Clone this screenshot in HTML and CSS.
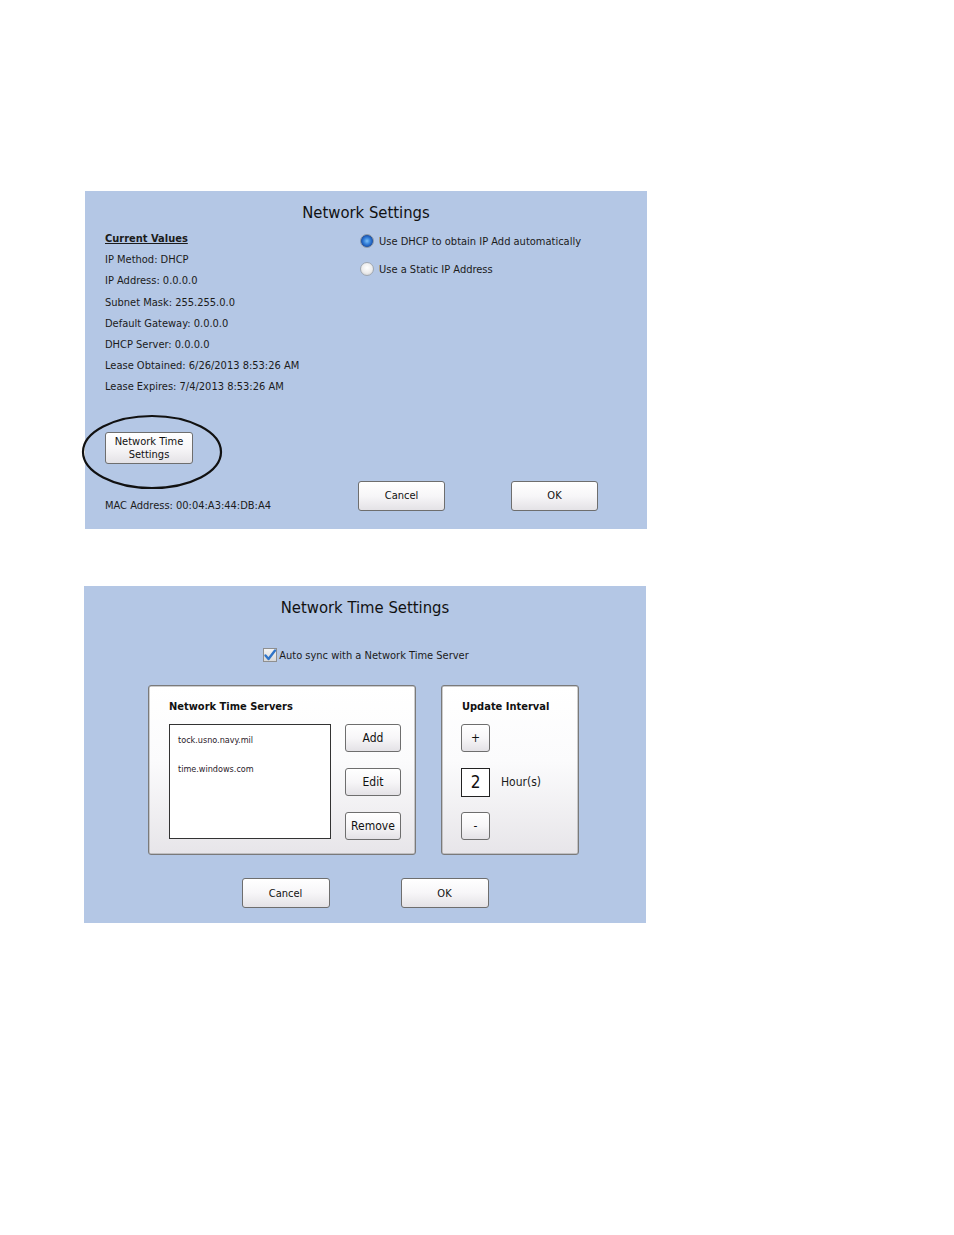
FILE: index.html
```html
<!DOCTYPE html>
<html>
<head>
<meta charset="utf-8">
<link rel="stylesheet" href="styles.css">
</head>
<body>
<div class="page">
  <section class="panel panel-net">
    <h1 class="title">Network Settings</h1>
    <div class="net-body">
      <div class="col-left">
        <div class="values">
          <div class="line heading">Current Values</div>
          <div class="line">IP Method: DHCP</div>
          <div class="line">IP Address: 0.0.0.0</div>
          <div class="line">Subnet Mask: 255.255.0.0</div>
          <div class="line">Default Gateway: 0.0.0.0</div>
          <div class="line">DHCP Server: 0.0.0.0</div>
          <div class="line">Lease Obtained: 6/26/2013 8:53:26 AM</div>
          <div class="line">Lease Expires: 7/4/2013 8:53:26 AM</div>
        </div>
        <div class="ntp-wrap">
          <button class="btn btn-ntp">Network Time<br>Settings</button>
          <svg class="ellipse" width="142" height="76" viewBox="0 0 142 76"><ellipse cx="71" cy="38" rx="69" ry="36" fill="none" stroke="#111" stroke-width="2.2"/></svg>
        </div>
        <div class="line mac">MAC Address: 00:04:A3:44:DB:A4</div>
      </div>
      <div class="col-right">
        <div class="radio-row"><span class="radio on"></span>Use DHCP to obtain IP Add automatically</div>
        <div class="radio-row"><span class="radio"></span>Use a Static IP Address</div>
        <div class="actions">
          <button class="btn btn-action">Cancel</button>
          <button class="btn btn-action">OK</button>
        </div>
      </div>
    </div>
  </section>

  <section class="panel panel-time">
    <h1 class="title">Network Time Settings</h1>
    <div class="check-row"><span class="checkbox"><svg width="14" height="14" viewBox="0 0 14 14"><path d="M2.5 7.5 L5.5 11 L12 2.5" fill="none" stroke="#2f74c8" stroke-width="2.4" stroke-linejoin="round" stroke-linecap="round"/></svg></span>Auto sync with a Network Time Server</div>
    <div class="groups">
      <div class="group group-servers">
        <div class="group-title">Network Time Servers</div>
        <div class="servers-body">
          <div class="listbox">
            <div class="item">tock.usno.navy.mil</div>
            <div class="item">time.windows.com</div>
          </div>
          <div class="side-btns">
            <button class="btn btn-small">Add</button>
            <button class="btn btn-small">Edit</button>
            <button class="btn btn-small">Remove</button>
          </div>
        </div>
      </div>
      <div class="group group-interval">
        <div class="group-title">Update Interval</div>
        <div class="interval-body">
          <button class="btn btn-step">+</button>
          <div class="value-row"><span class="value-box">2</span><span class="unit">Hour(s)</span></div>
          <button class="btn btn-step">-</button>
        </div>
      </div>
    </div>
    <div class="actions actions-time">
      <button class="btn btn-action">Cancel</button>
      <button class="btn btn-action">OK</button>
    </div>
  </section>
</div>
</body>
</html>
```

FILE: styles.css
```css
html, body {
  margin: 0;
  padding: 0;
  background: #ffffff;
}
body {
  font-family: "DejaVu Sans Condensed", "DejaVu Sans", sans-serif;
  color: #1b1b1b;
}
.page {
  padding: 191px 0 0 85px;
}
.panel {
  width: 562px;
  background: #b4c7e5;
  box-sizing: border-box;
}
.title {
  margin: 0;
  font-size: 16.5px;
  font-weight: normal;
  line-height: 20px;
  text-align: center;
  color: #111;
}
.panel-net {
  height: 338px;
  padding: 12px 0 0 20px;
}
.panel-net .title {
  margin-left: -20px;
}
.net-body {
  display: grid;
  grid-template-columns: 254px 1fr;
  margin-top: 4px;
}
.col-left {
  display: flex;
  flex-direction: column;
}
.values {
  padding-top: 1px;
}
.line {
  font-size: 11px;
  line-height: 21.2px;
  white-space: nowrap;
}
.heading {
  font-weight: bold;
  text-decoration: underline;
}
.ntp-wrap {
  position: relative;
  margin-top: 34px;
  height: 32px;
}
.btn {
  font-family: inherit;
  color: #111;
  background: linear-gradient(#ffffff 0%, #f7f6f8 50%, #e4e2e6 100%);
  border: 1px solid #6e6e6e;
  border-radius: 3px;
  box-sizing: border-box;
  padding: 0;
  cursor: default;
}
.btn-ntp {
  width: 88px;
  height: 32px;
  font-size: 11px;
  line-height: 13px;
}
.ellipse {
  position: absolute;
  left: -24px;
  top: -18px;
}
.mac {
  margin-top: 31.5px;
}
.col-right {
  display: flex;
  flex-direction: column;
}
.radio-row {
  display: flex;
  align-items: center;
  height: 28px;
  font-size: 11px;
  margin-left: 1px;
}
.radio {
  width: 14px;
  height: 14px;
  border-radius: 50%;
  box-sizing: border-box;
  margin-right: 5px;
  border: 1px solid #a0a8b2;
  background: radial-gradient(circle at 50% 40%, #ffffff 0%, #ececec 55%, #c6c6c6 100%);
}
.radio.on {
  border: 1px solid #8d98a6;
  background: radial-gradient(circle at 50% 50%, #7fc0f8 0%, #3a86dc 35%, #1f5bb8 62%, #1a4d9a 70%, #f2f2f2 76%, #d4d4d4 100%);
}
.actions {
  display: flex;
  gap: 66px;
}
.col-right .actions {
  margin-top: auto;
  margin-bottom: 5.5px;
  margin-left: -1px;
}
.btn-action {
  width: 87px;
  height: 30px;
  font-size: 11px;
}
.panel-time {
  height: 337px;
  margin-top: 57px;
  margin-left: -1px;
  padding-top: 12px;
}
.check-row {
  display: flex;
  align-items: center;
  justify-content: center;
  margin-top: 28px;
  height: 18px;
  font-size: 11px;
  padding-left: 2px;
}
.checkbox {
  width: 14px;
  height: 14px;
  box-sizing: border-box;
  border: 1px solid #8f8f8f;
  background: linear-gradient(#f4f4f4, #d8d8d8);
  margin-right: 2px;
  display: flex;
}
.checkbox svg {
  margin: -1px;
}
.groups {
  display: flex;
  gap: 25px;
  margin-top: 21px;
  padding-left: 64px;
}
.group {
  height: 170px;
  box-sizing: border-box;
  border: 1px solid #7a7a7a;
  box-shadow: inset 0 0 0 0.5px #9a9a9a;
  border-radius: 3px;
  background: linear-gradient(#ffffff 0%, #fbfbfc 45%, #e7e5e9 100%);
  padding: 13px 0 0 20px;
}
.group-servers {
  width: 268px;
}
.group-interval {
  width: 138px;
}
.group-title {
  font-size: 11px;
  font-weight: bold;
  line-height: 16px;
  color: #111;
}
.servers-body {
  display: flex;
  gap: 14px;
  margin-top: 9px;
}
.listbox {
  width: 162px;
  height: 115px;
  box-sizing: border-box;
  background: #ffffff;
  border: 1px solid #333;
  padding: 8px 0 0 8px;
}
.item {
  font-size: 9px;
  line-height: 15px;
  height: 29px;
  color: #2a1a2a;
}
.side-btns {
  display: flex;
  flex-direction: column;
  gap: 16px;
}
.btn-small {
  width: 56px;
  height: 28px;
  font-size: 12px;
}
.interval-body {
  display: flex;
  flex-direction: column;
  gap: 16px;
  margin-top: 9px;
  margin-left: -1px;
}
.btn-step {
  width: 29px;
  height: 28px;
  font-size: 12px;
}
.value-row {
  display: flex;
  align-items: center;
  height: 28px;
}
.value-box {
  width: 29px;
  height: 29px;
  box-sizing: border-box;
  border: 1px solid #222;
  background: #fff;
  font-size: 17px;
  display: flex;
  align-items: center;
  justify-content: center;
  color: #111;
}
.unit {
  margin-left: 11px;
  font-size: 12px;
}
.actions-time {
  justify-content: center;
  gap: 71px;
  margin-top: 23px;
}
.actions-time .btn-action {
  width: 88px;
}
```
